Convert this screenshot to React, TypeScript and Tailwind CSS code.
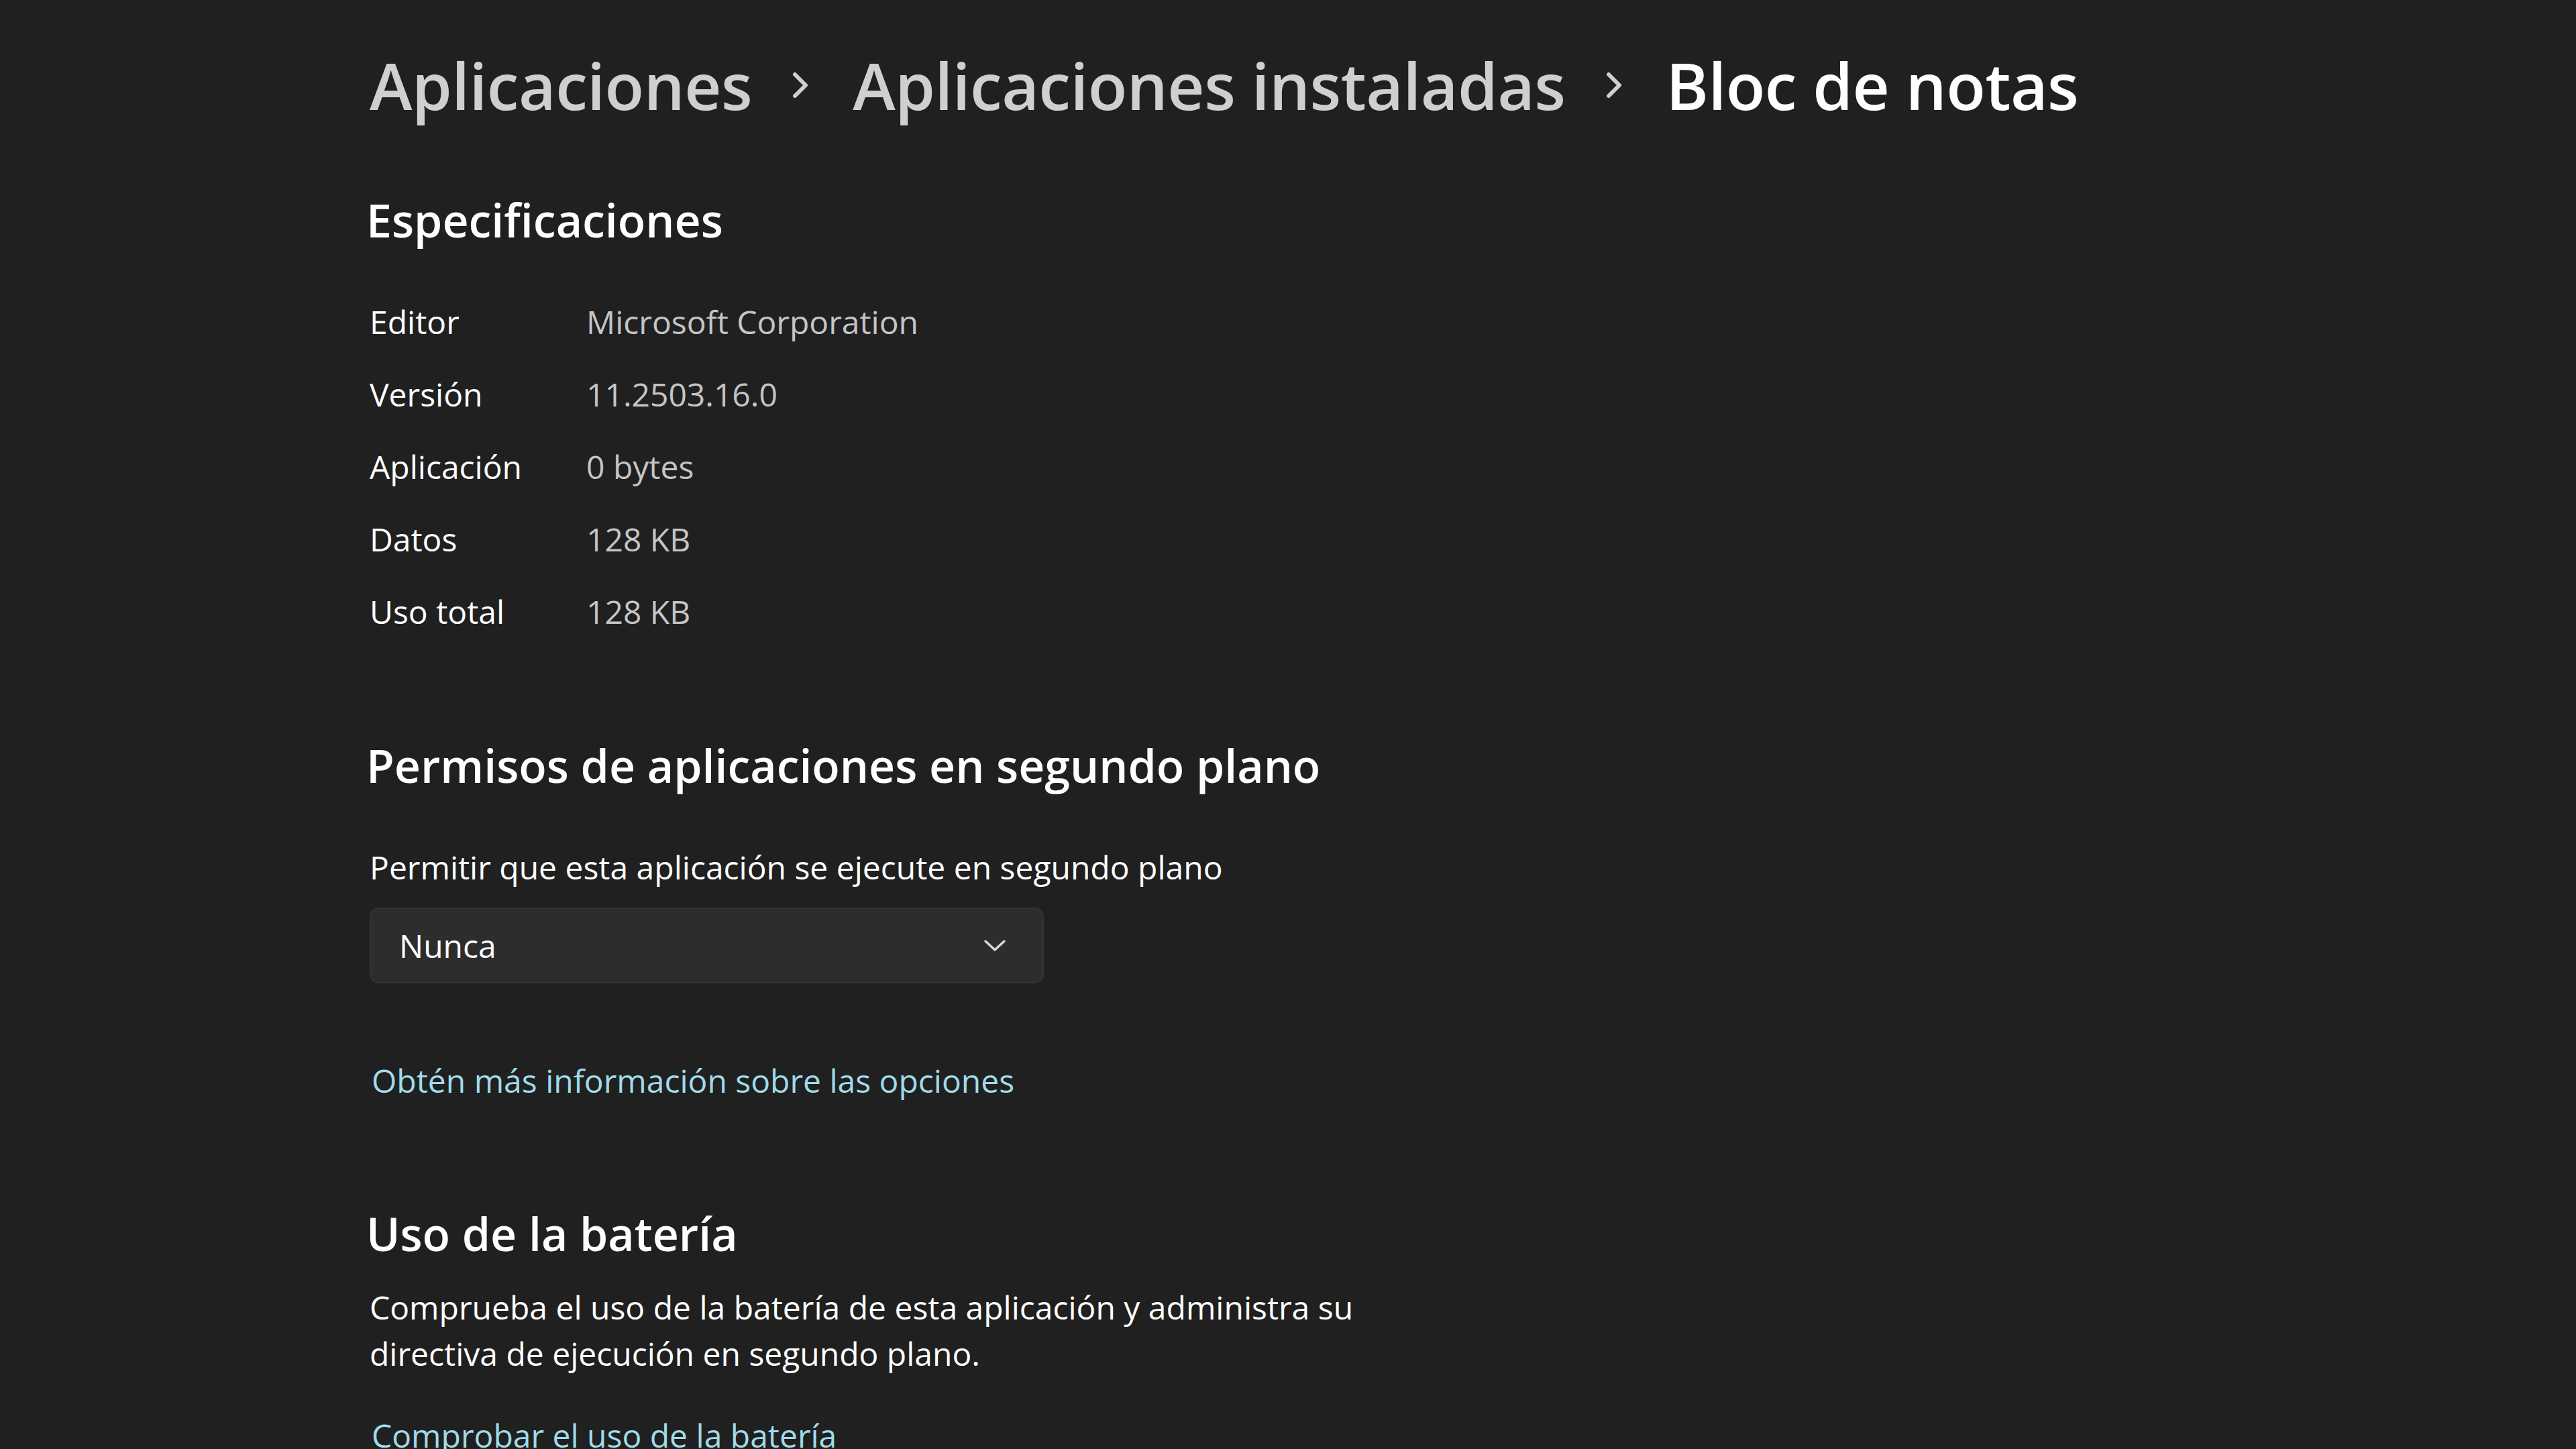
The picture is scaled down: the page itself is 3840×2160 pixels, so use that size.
import React from "react";

const font = { fontFamily: '"Open Sans", "Noto Sans", sans-serif' };

function Chevron() {
  return (
    <svg width="30" height="42" viewBox="0 0 30 42" className="ml-[58px] mr-[62px]" fill="none">
      <path d="M6 5 L22 21 L6 37" stroke="#cfcfcf" strokeWidth="6" strokeLinecap="round" strokeLinejoin="round" />
    </svg>
  );
}

const rows: [string, string][] = [
  ["Editor", "Microsoft Corporation"],
  ["Versión", "11.2503.16.0"],
  ["Aplicación", "0 bytes"],
  ["Datos", "128 KB"],
  ["Uso total", "128 KB"],
];

export default function App() {
  return (
    <div
      className="w-full h-[2160px] overflow-hidden bg-[#202020] pl-[551px] pt-[66px] text-white"
      style={font}
    >
      <div className="flex items-center h-[122px] text-[96px] font-semibold tracking-[-0.5px]">
        <span className="text-[#cfcfcf]">Aplicaciones</span>
        <Chevron />
        <span className="text-[#cfcfcf]">Aplicaciones instaladas</span>
        <Chevron />
        <span className="text-white">Bloc de notas</span>
      </div>

      <h2 className="mt-[95px] -ml-[5px] h-[90px] leading-[90px] text-[68px] font-semibold">
        Especificaciones
      </h2>

      <div className="mt-[53px] flex flex-col">
        {rows.map(([k, v]) => (
          <div key={k} className="flex h-[108px] items-center text-[48px]">
            <span className="w-[323px] text-white">{k}</span>
            <span className="text-[#c5c5c5]">{v}</span>
          </div>
        ))}
      </div>

      <h2 className="mt-[130px] -ml-[5px] h-[90px] leading-[90px] text-[68px] font-semibold">
        Permisos de aplicaciones en segundo plano
      </h2>

      <div className="mt-[74px] h-[66px] leading-[66px] text-[48px]">
        Permitir que esta aplicación se ejecute en segundo plano
      </div>

      <div className="mt-[27px] w-[1005px] h-[113px] rounded-[14px] bg-[#2d2d2d] border-2 border-[#333333] flex items-center justify-between pl-[42px] pr-[54px]">
        <span className="text-[48px] text-white">Nunca</span>
        <svg width="34" height="20" viewBox="0 0 34 20" fill="none">
          <path d="M3 3 L17 16 L31 3" stroke="#d8d8d8" strokeWidth="3.5" strokeLinecap="round" strokeLinejoin="round" />
        </svg>
      </div>

      <div className="mt-[112px] ml-[3px] h-[66px] leading-[66px] text-[48px] text-[#a0dbe9]">
        Obtén más información sobre las opciones
      </div>

      <h2 className="mt-[150px] -ml-[5px] h-[90px] leading-[90px] text-[68px] font-semibold">
        Uso de la batería
      </h2>

      <p className="mt-[30px] leading-[69px] text-[48px] text-white">
        Comprueba el uso de la batería de esta aplicación y administra su
        <br />
        directiva de ejecución en segundo plano.
      </p>

      <div className="mt-[55px] ml-[3px] h-[66px] leading-[66px] text-[48px] text-[#a0dbe9]">
        Comprobar el uso de la batería
      </div>
    </div>
  );
}
